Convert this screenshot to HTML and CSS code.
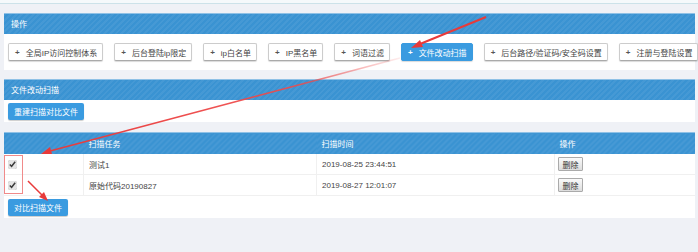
FILE: index.html
```html
<!DOCTYPE html>
<html lang="zh-CN">

<head>
    <meta charset="UTF-8">
    <title>文件改动扫描</title>
    <link rel="stylesheet" href="styles.css">
</head>

<body>
    <div class="topbar"></div>
    <div class="main">
        <div class="panel">
            <div class="panel-head">操作</div>
            <div class="panel-body tools">
                <a class="tool"><span class="plus">+</span>全局IP访问控制体系</a>
                <a class="tool"><span class="plus">+</span>后台登陆ip限定</a>
                <a class="tool"><span class="plus">+</span>ip白名单</a>
                <a class="tool"><span class="plus">+</span>IP黑名单</a>
                <a class="tool"><span class="plus">+</span>词语过滤</a>
                <a class="tool active"><span class="plus">+</span>文件改动扫描</a>
                <a class="tool"><span class="plus">+</span>后台路径/验证码/安全码设置</a>
                <a class="tool"><span class="plus">+</span>注册与登陆设置</a>
            </div>
        </div>

        <div class="panel">
            <div class="panel-head">文件改动扫描</div>
            <div class="panel-body rebuild">
                <button class="btn-blue">重建扫描对比文件</button>
            </div>
        </div>

        <div class="panel">
            <table class="scan-table">
                <thead>
                    <tr>
                        <th class="col-check"></th>
                        <th class="col-task">扫描任务</th>
                        <th class="col-time">扫描时间</th>
                        <th>操作</th>
                    </tr>
                </thead>
                <tbody>
                    <tr>
                        <td class="col-check"><input type="checkbox" checked></td>
                        <td>测试1</td>
                        <td>2019-08-25 23:44:51</td>
                        <td><button class="btn-del">删除</button></td>
                    </tr>
                    <tr>
                        <td class="col-check"><input type="checkbox" checked></td>
                        <td>原始代码20190827</td>
                        <td>2019-08-27 12:01:07</td>
                        <td><button class="btn-del">删除</button></td>
                    </tr>
                </tbody>
            </table>
            <div class="compare">
                <button class="btn-blue">对比扫描文件</button>
            </div>
        </div>
    </div>

    <!-- 截图上的红色标注 -->
    <svg class="marks" width="698" height="252" viewBox="0 0 698 252">
        <defs>
            <linearGradient id="fade" x1="400" y1="58" x2="42" y2="153" gradientUnits="userSpaceOnUse">
                <stop offset="0" stop-color="#f04a4a" stop-opacity="0.1" />
                <stop offset="0.3" stop-color="#f04a4a" stop-opacity="0.9" />
                <stop offset="1" stop-color="#e83a3a" />
            </linearGradient>
        </defs>
        <line x1="486" y1="17" x2="420" y2="44" stroke="#e83a3a" stroke-width="2" />
        <polygon points="411,48 420,40 423,47" fill="#e83a3a" />
        <line x1="400" y1="58" x2="50" y2="151" stroke="url(#fade)" stroke-width="1.6" />
        <polygon points="41,154 50,147 52,154" fill="#e83a3a" />
        <rect x="4.5" y="155.5" width="18" height="38" fill="none" stroke="#f08a8a" stroke-width="1" />
        <line x1="28" y1="181" x2="43" y2="196" stroke="#e83a3a" stroke-width="1.5" />
        <polygon points="48,201 39,197 44,192" fill="#e83a3a" />
    </svg>
</body>

</html>
```

FILE: styles.css
```css
body {
    font-family: "Liberation Sans", "Noto Sans CJK SC", sans-serif;
    font-size: 8px;
    margin: 0;
    background-color: #eff1f6;
    color: #333;
    position: relative;
    height: 252px;
    overflow: hidden;
}

.topbar {
    height: 3px;
    background-color: #f5f9fb;
    border-bottom: 1px solid #cce2e9;
}

.main {
    padding: 9px 3px 0 4px;
}

.panel {
    background-color: #fff;
    margin-bottom: 9px;
}

.panel:last-child {
    margin-top: 10px;
}

.panel-head {
    height: 21px;
    line-height: 21px;
    padding-left: 7px;
    color: #fff;
    background-color: #3a93d2;
    background-image: repeating-linear-gradient(135deg, rgba(255, 255, 255, 0.06) 0 2px, transparent 2px 4px);
    border-top: 1px solid #8fc1e6;
    box-sizing: border-box;
}

.tools {
    display: flex;
    gap: 11px;
    padding: 9px 4px 9px 4px;
}

.tool {
    display: flex;
    align-items: center;
    height: 18px;
    padding: 0 5px 0 6px;
    background-color: #fff;
    border: 1px solid #ccc;
    border-bottom-color: #aaa;
    border-radius: 2px;
    box-shadow: 0 1px 1px rgba(0, 0, 0, 0.15);
    box-sizing: border-box;
    color: #444;
    white-space: nowrap;
}

.tool .plus {
    font-weight: bold;
    font-size: 8px;
    margin-right: 6px;
    color: #555;
}

.tool.active {
    background-color: #3a9be0;
    border-color: #3a9be0;
    color: #fff;
}

.tool.active .plus {
    color: #fff;
}

.rebuild {
    padding: 3px 4px 2px 4px;
}

.btn-blue {
    font-family: inherit;
    font-size: 8px;
    height: 17px;
    padding: 0 6px;
    color: #fff;
    background-color: #3a9be0;
    border: none;
    border-radius: 2px;
    box-shadow: 0 1px 1px rgba(0, 0, 0, 0.2);
}

.scan-table {
    width: 100%;
    border-collapse: collapse;
}

.scan-table th {
    height: 21px;
    padding: 0 0 0 5px;
    text-align: left;
    font-weight: normal;
    color: #fff;
    background-color: #3a93d2;
    background-image: repeating-linear-gradient(135deg, rgba(255, 255, 255, 0.06) 0 2px, transparent 2px 4px);
    border-top: 1px solid #8fc1e6;
}

.scan-table td {
    height: 20px;
    padding: 0 0 0 5px;
    border-bottom: 1px solid #f0f0f0;
    border-left: 1px solid #f0f0f0;
    color: #444;
}

.scan-table td:first-child {
    border-left: none;
}

.col-check {
    width: 74px;
}

.col-task {
    width: 228px;
}

.col-time {
    width: 233px;
}

.scan-table input[type="checkbox"] {
    width: 9px;
    height: 9px;
    margin: 0 0 0 -1px;
    vertical-align: middle;
    accent-color: #e4e4e4;
}

.btn-del {
    font-family: inherit;
    font-size: 8px;
    width: 25px;
    height: 14px;
    padding: 0;
    margin-left: -2px;
    color: #333;
    background: linear-gradient(#fafafa, #ddd);
    border: 1px solid #aaa;
    border-radius: 1px;
}

.compare {
    padding: 3px 4px 2px 4px;
}

.marks {
    position: absolute;
    left: 0;
    top: 0;
    pointer-events: none;
}
```
